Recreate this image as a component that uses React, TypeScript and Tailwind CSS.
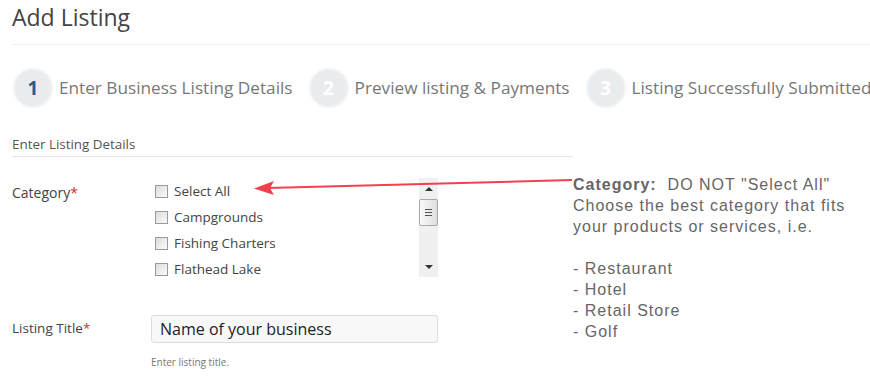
import React from "react";

const Step = ({ n, label, active }: { n: string; label: string; active?: boolean }) => (
  <div className="flex items-center shrink-0">
    <div className="w-[40px] h-[40px] rounded-full bg-[#e9ecef] border-2 border-[#f3f3f3] flex items-center justify-center shrink-0">
      <span className={`text-[19px] font-bold leading-none ${active ? "text-[#1e5f8e]" : "text-white"}`}>{n}</span>
    </div>
    <span className="ml-[6px] text-[17.2px] text-[#777] whitespace-nowrap">{label}</span>
  </div>
);

const Check = ({ label }: { label: string }) => (
  <div className="flex items-center h-[26px]">
    <div className="w-[13px] h-[13px] border border-[#9a9a9a] bg-gradient-to-br from-[#dcdcdc] to-[#fbfbfb] shrink-0" />
    <span className="ml-[6px] text-[13.5px] text-[#444]">{label}</span>
  </div>
);

export default function App() {
  return (
    <div
      className="relative w-[870px] h-[378px] overflow-hidden bg-white"
      style={{ fontFamily: '"Open Sans", sans-serif' }}
    >
      <div className="pl-[12px]">
        <h1 className="text-[23px] text-[#444] leading-none pt-[6px] h-[44px]">Add Listing</h1>
        <div className="border-t border-[#eeeeee]" />
        <div className="flex items-center mt-[23px] ml-[1px] gap-[16px]">
          <Step n="1" label="Enter Business Listing Details" active />
          <Step n="2" label="Preview listing & Payments" />
          <Step n="3" label="Listing Successfully Submitted" />
        </div>
        <div className="flex mt-[26px]">
          <div className="w-[561px] shrink-0">
            <div className="text-[13.4px] text-[#555] pb-[2px] border-b border-[#e5e5e5]">Enter Listing Details</div>
            <div className="flex mt-[21px]">
              <div className="w-[139px] text-[14px] text-[#444] pt-[4px]">
                Category<span className="text-[#c9302c]">*</span>
              </div>
              <div className="w-[287px] h-[99px] flex justify-between">
                <div className="pl-[4px]">
                  <Check label="Select All" />
                  <Check label="Campgrounds" />
                  <Check label="Fishing Charters" />
                  <Check label="Flathead Lake" />
                </div>
                <div className="w-[19px] h-[99px] bg-[#f0f0f0] flex flex-col items-center">
                  <div className="h-[21px] flex items-center justify-center">
                    <div className="w-0 h-0 border-l-[4px] border-r-[4px] border-b-[4px] border-l-transparent border-r-transparent border-b-[#333]" />
                  </div>
                  <div className="w-[19px] h-[27px] rounded-[2px] border border-[#a8a8a8] bg-gradient-to-r from-[#fafafa] to-[#dedede] flex flex-col items-center justify-center gap-[2px]">
                    <div className="w-[7px] h-px bg-[#555]" />
                    <div className="w-[7px] h-px bg-[#555]" />
                    <div className="w-[7px] h-px bg-[#555]" />
                  </div>
                  <div className="flex-1" />
                  <div className="h-[21px] flex items-center justify-center">
                    <div className="w-0 h-0 border-l-[4px] border-r-[4px] border-t-[4px] border-l-transparent border-r-transparent border-t-[#333]" />
                  </div>
                </div>
              </div>
            </div>
            <div className="flex mt-[38px]">
              <div className="w-[139px] text-[13.5px] text-[#444] pt-[3px]">
                Listing Title<span className="text-[#c9302c]">*</span>
              </div>
              <div>
                <div className="w-[287px] h-[28px] rounded-[3px] border border-[#dddddd] bg-[#f8f8f8] flex items-center pl-[8px] text-[16px] text-[#222]">
                  Name of your business
                </div>
                <div className="text-[10px] text-[#777] mt-[12px]">Enter listing title.</div>
              </div>
            </div>
          </div>
          <div
            className="pt-[40px] text-[16px] tracking-[1px] leading-[21px] text-[#666] whitespace-pre"
            style={{ fontFamily: '"Liberation Sans", Arial, sans-serif' }}
          >
            <div><span className="font-bold">Category:</span>{'  DO NOT "Select All"'}</div>
            <div>Choose the best category that fits</div>
            <div>your products or services, i.e.</div>
            <div>&nbsp;</div>
            <div>- Restaurant</div>
            <div>- Hotel</div>
            <div>- Retail Store</div>
            <div>- Golf</div>
          </div>
        </div>
      </div>
      <svg className="absolute left-0 top-0 pointer-events-none" width="870" height="378">
        <line x1="572" y1="180" x2="268" y2="188" stroke="#f2404f" strokeWidth="2" />
        <path d="M254 188.5 L274 181 L270 188.2 L274 195 Z" fill="#f2404f" />
      </svg>
    </div>
  );
}
